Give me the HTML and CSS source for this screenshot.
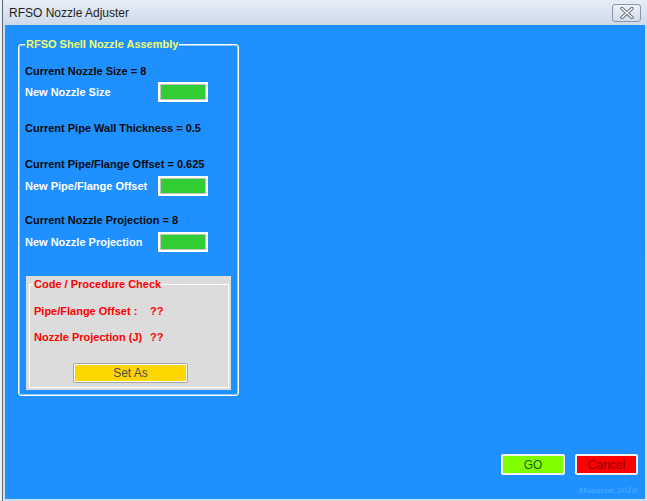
FILE: index.html
```html
<!DOCTYPE html>
<html lang="en">
<head>
  <meta charset="UTF-8">
  <title>RFSO Nozzle Adjuster</title>
  <link rel="stylesheet" href="styles.css">
</head>
<body>
  <div class="window">
    <div class="frame">

      <div class="titlebar">
        <span class="title">RFSO Nozzle Adjuster</span>
        <div class="close-btn">
          <svg width="16" height="12" viewBox="0 0 16 12">
            <path d="M3 1.5 L13 10.5 M13 1.5 L3 10.5" stroke="#5d6b7c" stroke-width="3.4" stroke-linecap="round"/>
            <path d="M3 1.5 L13 10.5 M13 1.5 L3 10.5" stroke="#fff" stroke-width="1.6" stroke-linecap="round"/>
          </svg>
        </div>
      </div>

      <div class="client">
        <div class="group">
          <span class="legend">RFSO Shell Nozzle Assembly</span>

          <div class="row r1 dark">Current Nozzle Size = 8</div>
          <div class="row r2 light">
            <span class="lbl">New Nozzle Size</span>
            <span class="input"></span>
          </div>

          <div class="row r3 dark">Current Pipe Wall Thickness = 0.5</div>

          <div class="row r4 dark">Current Pipe/Flange Offset = 0.625</div>
          <div class="row r5 light">
            <span class="lbl">New Pipe/Flange Offset</span>
            <span class="input"></span>
          </div>

          <div class="row r6 dark">Current Nozzle Projection = 8</div>
          <div class="row r7 light">
            <span class="lbl">New Nozzle Projection</span>
            <span class="input"></span>
          </div>

          <div class="check-panel">
            <div class="check-group">
              <span class="check-legend">Code / Procedure Check</span>
              <div class="row check-row first">
                <span class="check-lbl">Pipe/Flange Offset :</span>
                <span>??</span>
              </div>
              <div class="row check-row">
                <span class="check-lbl">Nozzle Projection (J)</span>
                <span>??</span>
              </div>
              <div class="set-btn">Set As</div>
            </div>
          </div>
        </div>

        <div class="actions">
          <div class="btn btn-go">GO</div>
          <div class="btn btn-cancel">Cancel</div>
        </div>
        <div class="credit">Hosuron 2016</div>
      </div>

    </div>
  </div>
</body>
</html>
```

FILE: styles.css
```css
body {
  margin: 0;
  font-family: 'Liberation Sans', Arial, sans-serif;
  background: #fff;
}

.window {
  width: 647px;
  height: 501px;
  box-sizing: border-box;
  padding-left: 2px;
  background: #eef2f7;
}

.frame {
  height: 100%;
  box-sizing: border-box;
  border-left: 1px solid #5a6878;
  padding: 0 2px 2px 2px;
  display: flex;
  flex-direction: column;
  background: linear-gradient(#e6edf6, #cfdbea 25px, #d4dfec);
}

/* caption bar */
.titlebar {
  height: 25px;
  display: flex;
  align-items: flex-start;
  justify-content: space-between;
}
.title {
  font-size: 12px;
  color: #1e1e1e;
  padding: 6px 0 0 4px;
}
.close-btn {
  margin: 4px 4px 0 0;
  width: 27px;
  height: 16px;
  border: 1px solid #8796aa;
  border-radius: 3px;
  background: linear-gradient(#eef2f7, #d2dce8);
  display: flex;
  align-items: center;
  justify-content: center;
}

/* blue client area */
.client {
  flex: 1;
  background: #1e90ff;
  display: flex;
  flex-direction: column;
}

.group {
  position: relative;
  margin: 19px 0 0 13px;
  width: 221px;
  height: 352px;
  box-sizing: border-box;
  border: 1px solid #fff;
  border-radius: 3px;
  box-shadow: inset 0 0 0 1px #8cc6ff;
  padding: 16px 0 0 6px;
}
.legend {
  position: absolute;
  top: -8px;
  left: 6px;
  padding: 0 1px;
  background: #1e90ff;
  color: #f2ff6a;
  font-size: 11px;
  font-weight: bold;
  line-height: 14px;
}

.row {
  height: 20px;
  display: flex;
  align-items: center;
  font-size: 11px;
  font-weight: bold;
}
.dark { color: #0a0a0a; }
.light { color: #fff; }
.r2 { margin-top: 1px; }
.r3 { margin-top: 16px; }
.r4 { margin-top: 16px; }
.r5 { margin-top: 2px; }
.r6 { margin-top: 14px; }
.r7 { margin-top: 2px; }

.lbl { width: 133px; }
.input {
  width: 50px;
  height: 20px;
  box-sizing: border-box;
  border: 2px solid #fff;
  box-shadow: inset 0 0 0 1px #b9c9b9;
  background: #32cd32;
}

/* code check panel */
.check-panel {
  margin: 24px 0 0 1px;
  width: 205px;
  height: 114px;
  box-sizing: border-box;
  background: #dcdcdc;
  padding: 8px 2px 2px 3px;
}
.check-group {
  position: relative;
  height: 100%;
  box-sizing: border-box;
  border: 1px solid #fff;
  padding: 16px 0 0 4px;
  color: #f00;
}
.check-legend {
  position: absolute;
  top: -8px;
  left: 3px;
  padding: 0 1px;
  background: #dcdcdc;
  font-size: 11px;
  font-weight: bold;
  line-height: 14px;
}
.check-row + .check-row { margin-top: 6px; }
.check-lbl { width: 116px; }

.set-btn {
  margin: 16px 0 0 39px;
  width: 115px;
  height: 20px;
  box-sizing: border-box;
  border: 1px solid #a6a6a6;
  border-radius: 2px;
  box-shadow: inset 0 0 0 1px #fff;
  background: #ffd700;
  color: #4d4d4d;
  font-size: 12px;
  display: flex;
  align-items: center;
  justify-content: center;
}

/* bottom buttons */
.actions {
  margin-top: auto;
  display: flex;
  justify-content: flex-end;
  gap: 10px;
  padding-right: 7px;
}
.btn {
  height: 21px;
  box-sizing: border-box;
  border: 2px solid #f2f2f2;
  border-radius: 2px;
  font-size: 12px;
  display: flex;
  align-items: center;
  justify-content: center;
}
.btn-go {
  width: 64px;
  background: #7fff00;
  color: #2c5a00;
}
.btn-cancel {
  width: 63px;
  background: #ff0000;
  color: #8b0000;
}

.credit {
  height: 24px;
  box-sizing: border-box;
  padding: 11px 8px 0 0;
  text-align: right;
  font-family: 'DejaVu Serif', serif;
  font-style: italic;
  font-size: 8px;
  line-height: 10px;
  color: #5bb0ff;
}
```
